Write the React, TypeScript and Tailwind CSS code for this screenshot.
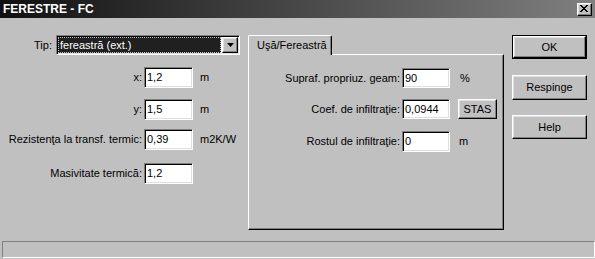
import React from "react";

const sunken =
  "border border-t-[#808080] border-l-[#808080] border-b-white border-r-white shadow-[inset_1px_1px_0_#000,inset_-1px_-1px_0_#dfdfdf]";
const raised =
  "border border-t-white border-l-white border-b-black border-r-black shadow-[inset_-1px_-1px_0_#808080,inset_1px_1px_0_#dfdfdf]";

function Input({ value, w, h }: { value: string; w: string; h: string }) {
  return (
    <div className={`${sunken} ${w} ${h} bg-white flex items-center pl-[2px] text-black`}>
      {value}
    </div>
  );
}

function Btn({ label, cls, isDefault }: { label: string; cls: string; isDefault?: boolean }) {
  if (isDefault) {
    return (
      <div className={`${cls} border border-black flex`}>
        <div className={`${raised} flex-1 flex items-center justify-center text-black`}>{label}</div>
      </div>
    );
  }
  return <div className={`${cls} ${raised} flex items-center justify-center text-black`}>{label}</div>;
}

export default function App() {
  return (
    <div
      className="w-[595px] h-[259px] bg-[#c0c0c0] flex flex-col overflow-hidden text-[11px] leading-none text-black"
      style={{ fontFamily: '"Liberation Sans", Arial, sans-serif' }}
    >
      {/* Title bar */}
      <div className="h-[18px] flex items-center justify-between bg-[linear-gradient(to_right,#101010,#808080)] pl-[3px] pr-[3px]">
        <div className="text-white font-bold text-[12px]">FERESTRE - FC</div>
        <div className={`${raised} w-[15px] h-[13px] bg-[#c0c0c0] flex items-center justify-center`}>
          <svg width="9" height="8" viewBox="0 0 9 8">
            <path d="M1 0 L8 7 M0 0 L7 7 M8 0 L1 7 M7 0 L0 7" stroke="#000" strokeWidth="1" />
          </svg>
        </div>
      </div>

      {/* Main */}
      <div className="h-[223px] flex items-start">
        {/* Left column */}
        <div className="w-[248px] flex flex-col">
          <div className="flex items-center h-[20px] mt-[17px]">
            <div className="w-[56px] text-right pr-[4px]">Tip:</div>
            <div className={`${sunken} w-[184px] h-[20px] bg-white flex items-center p-[1px]`}>
              <div className="flex-1 h-[16px] bg-[#202020] text-white flex items-center pl-[1px] border border-dotted border-[#c0c0c0] mr-[1px]">
                fereastră (ext.)
              </div>
              <div className={`${raised} w-[16px] h-[16px] bg-[#c0c0c0] flex items-center justify-center`}>
                <svg width="7" height="4" viewBox="0 0 7 4">
                  <path d="M0 0 H7 L3.5 4 Z" fill="#000" />
                </svg>
              </div>
            </div>
          </div>
          <div className="flex items-center h-[21px] mt-[12px]">
            <div className="w-[144px] text-right pr-[2px]">x:</div>
            <Input value="1,2" w="w-[49px]" h="h-[21px]" />
            <div className="ml-[7px]">m</div>
          </div>
          <div className="flex items-center h-[21px] mt-[11px]">
            <div className="w-[144px] text-right pr-[2px]">y:</div>
            <Input value="1,5" w="w-[49px]" h="h-[21px]" />
            <div className="ml-[7px]">m</div>
          </div>
          <div className="flex items-center h-[21px] mt-[9px]">
            <div className="w-[144px] text-right pr-[2px] whitespace-nowrap">Rezistenţa la transf. termic:</div>
            <Input value="0,39" w="w-[49px]" h="h-[21px]" />
            <div className="ml-[7px]">m2K/W</div>
          </div>
          <div className="flex items-center h-[21px] mt-[13px]">
            <div className="w-[144px] text-right pr-[2px]">Masivitate termică:</div>
            <Input value="1,2" w="w-[49px]" h="h-[21px]" />
          </div>
        </div>

        {/* Tab panel */}
        <div className="w-[256px] flex flex-col mt-[17px]">
          <div className="relative z-10 -mb-px w-[84px] h-[20px] bg-[#c0c0c0] border-t border-l border-r border-t-white border-l-white border-r-black rounded-t-[2px] shadow-[inset_-1px_0_0_#808080] flex items-center pl-[8px]">
            Uşă/Fereastră
          </div>
          <div className="h-[176px] border border-t-white border-l-white border-b-black border-r-black shadow-[inset_-1px_-1px_0_#808080] flex flex-col">
            <div className="flex items-center h-[20px] mt-[13px]">
              <div className="w-[153px] text-right pr-[2px] whitespace-nowrap">Supraf. propriuz. geam:</div>
              <Input value="90" w="w-[48px]" h="h-[20px]" />
              <div className="ml-[10px]">%</div>
            </div>
            <div className="flex items-center h-[20px] mt-[11px]">
              <div className="w-[153px] text-right pr-[2px] whitespace-nowrap">Coef. de infiltraţie:</div>
              <Input value="0,0944" w="w-[48px]" h="h-[20px]" />
              <Btn label="STAS" cls="ml-[8px] w-[39px] h-[20px]" />
            </div>
            <div className="flex items-center h-[21px] mt-[12px]">
              <div className="w-[153px] text-right pr-[2px] whitespace-nowrap">Rostul de infiltraţie:</div>
              <Input value="0" w="w-[48px]" h="h-[21px]" />
              <div className="ml-[9px]">m</div>
            </div>
          </div>
        </div>

        {/* Buttons */}
        <div className="ml-[8px] flex flex-col">
          <Btn label="OK" cls="mt-[17px] w-[75px] h-[24px]" isDefault />
          <Btn label="Respinge" cls="mt-[16px] w-[75px] h-[25px]" />
          <Btn label="Help" cls="mt-[15px] w-[75px] h-[24px]" />
        </div>
      </div>

      {/* Status bar */}
      <div className="ml-[2px] h-[17px] border border-t-[#808080] border-l-[#808080] border-b-white border-r-white" />
    </div>
  );
}
